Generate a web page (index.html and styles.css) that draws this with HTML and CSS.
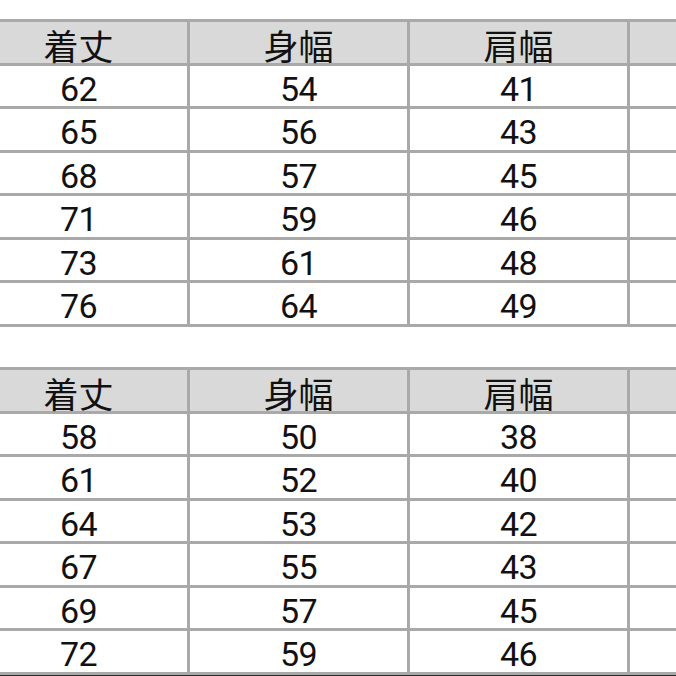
FILE: index.html
```html
<!DOCTYPE html>
<html lang="ja">
<head>
<meta charset="utf-8">
<title>サイズ表</title>
<link rel="stylesheet" href="styles.css">
</head>
<body>
<div class="page">
  <div class="sheet sheet-first">
    <div class="cell head">着丈</div><div class="cell head">身幅</div><div class="cell head">肩幅</div><div class="cell head"></div>
    <div class="cell">62</div><div class="cell">54</div><div class="cell">41</div><div class="cell"></div>
    <div class="cell">65</div><div class="cell">56</div><div class="cell">43</div><div class="cell"></div>
    <div class="cell">68</div><div class="cell">57</div><div class="cell">45</div><div class="cell"></div>
    <div class="cell">71</div><div class="cell">59</div><div class="cell">46</div><div class="cell"></div>
    <div class="cell">73</div><div class="cell">61</div><div class="cell">48</div><div class="cell"></div>
    <div class="cell">76</div><div class="cell">64</div><div class="cell">49</div><div class="cell"></div>
  </div>
  <div class="sheet sheet-second">
    <div class="cell head">着丈</div><div class="cell head">身幅</div><div class="cell head">肩幅</div><div class="cell head"></div>
    <div class="cell">58</div><div class="cell">50</div><div class="cell">38</div><div class="cell"></div>
    <div class="cell">61</div><div class="cell">52</div><div class="cell">40</div><div class="cell"></div>
    <div class="cell">64</div><div class="cell">53</div><div class="cell">42</div><div class="cell"></div>
    <div class="cell">67</div><div class="cell">55</div><div class="cell">43</div><div class="cell"></div>
    <div class="cell">69</div><div class="cell">57</div><div class="cell">45</div><div class="cell"></div>
    <div class="cell">72</div><div class="cell">59</div><div class="cell">46</div><div class="cell"></div>
  </div>
  <div class="edge"></div>
</div>
</body>
</html>
```

FILE: styles.css
```css
html, body {
  margin: 0;
  padding: 0;
  background: #ffffff;
  overflow: hidden;
}

.page {
  width: 676px;
  height: 676px;
  overflow: hidden;
  display: flex;
  flex-direction: column;
}

.sheet {
  display: grid;
  grid-template-columns: repeat(4, 217px);
  grid-auto-rows: 40.5px;
  gap: 3px;
  padding: 3px;
  background: #a9a9a9;
  margin-left: -33px;
  width: max-content;
}

.sheet-first {
  margin-top: 19px;
}

.sheet-second {
  margin-top: 40.5px;
}

.cell {
  background: #ffffff;
  display: flex;
  align-items: center;
  justify-content: center;
  padding-top: 6px;
  box-sizing: border-box;
  font-family: Roboto, "Liberation Sans", "Noto Sans CJK JP", sans-serif;
  font-weight: 400;
  font-size: 34px;
  line-height: 1;
  color: #111111;
  letter-spacing: -0.5px;
}

.head {
  background: #d9d9d9;
  font-family: "Noto Sans CJK JP", "Noto Sans CJK SC", sans-serif;
  font-size: 35px;
  padding-top: 5px;
  font-weight: 400;
  letter-spacing: 0;
}

.edge {
  height: 3px;
  margin-top: 0;
  background: #2a2a2a;
}
```
